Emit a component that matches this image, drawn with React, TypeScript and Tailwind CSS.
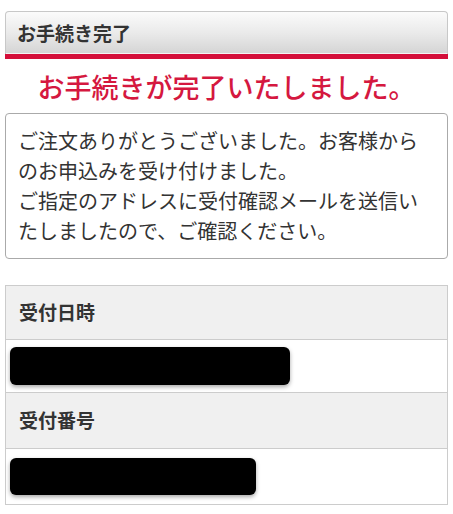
import React from "react";

export default function App() {
  return (
    <div
      className="w-[453px] min-h-[514px] bg-white px-[5px] pt-[11px] text-[#333]"
      style={{ fontFamily: '"Noto Sans CJK JP", "Noto Sans", sans-serif' }}
    >
      <div className="rounded-t-[4px] border border-b-0 border-[#c8c8c8] bg-gradient-to-b from-[#fbfbfb] via-[#eaeaea] to-[#d4d4d4] shadow-[inset_0_-1px_0_#f4f4f4]">
        <h1 className="h-[42px] pl-[11px] text-[19px] font-bold leading-[42px] text-[#333]">
          お手続き完了
        </h1>
      </div>
      <div className="h-[5px] bg-[#d40f3a]" />

      <p className="mt-[7px] mb-[5px] text-center text-[27px] font-medium leading-[42px] text-[#d5183f]">
        お手続きが完了いたしました。
      </p>

      <div className="rounded-[4px] border border-[#aaa] px-3 py-3 text-[20px] leading-[30px] text-[#333]">
        ご注文ありがとうございました。お客様から
        <br />
        のお申込みを受け付けました。
        <br />
        ご指定のアドレスに受付確認メールを送信い
        <br />
        たしましたので、ご確認ください。
      </div>

      <div className="mt-[26px] border border-[#ccc]">
        <div className="flex h-[54px] items-center border-b border-[#ccc] bg-[#f0f0f0] px-[13px] text-[19px] font-bold">
          受付日時
        </div>
        <div className="flex h-[53px] items-center border-b border-[#ccc] bg-white px-[4px]">
          <div className="h-[38px] w-[280px] rounded-[6px] bg-black shadow-[0_2px_4px_rgba(0,0,0,0.35)]" />
        </div>
        <div className="flex h-[56px] items-center border-b border-[#ccc] bg-[#f0f0f0] px-[13px] text-[19px] font-bold">
          受付番号
        </div>
        <div className="flex h-[55px] items-center bg-white px-[4px]">
          <div className="h-[37px] w-[246px] rounded-[6px] bg-black shadow-[0_2px_4px_rgba(0,0,0,0.35)]" />
        </div>
      </div>
    </div>
  );
}
